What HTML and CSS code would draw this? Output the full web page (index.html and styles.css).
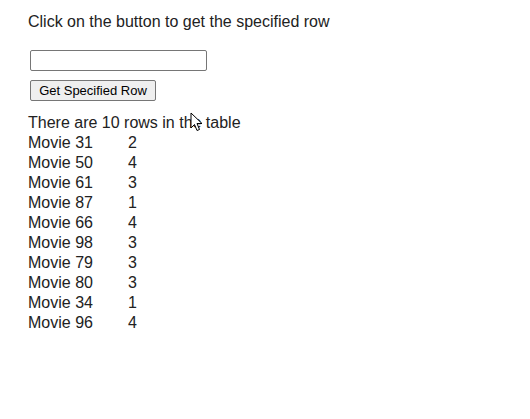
FILE: index.html
```html
<!DOCTYPE html>
<html>
<head>
<meta charset="utf-8">
<link rel="stylesheet" href="styles.css">
</head>
<body>
<div class="page">
  <p class="intro">Click on the button to get the specified row</p>
  <input class="field" type="text">
  <button class="btn">Get Specified Row</button>
  <p class="count">There are 10 rows in the table</p>
  <div class="rows">
    <span>Movie 31</span><span>2</span>
    <span>Movie 50</span><span>4</span>
    <span>Movie 61</span><span>3</span>
    <span>Movie 87</span><span>1</span>
    <span>Movie 66</span><span>4</span>
    <span>Movie 98</span><span>3</span>
    <span>Movie 79</span><span>3</span>
    <span>Movie 80</span><span>3</span>
    <span>Movie 34</span><span>1</span>
    <span>Movie 96</span><span>4</span>
  </div>
  <svg class="cursor" width="14" height="21" viewBox="0 0 14 21"><path d="M1 1 L1 16 L4.5 12.5 L7 18.5 L9.5 17.5 L7 11.5 L12 11.5 Z" fill="#fff" stroke="#000" stroke-width="1" stroke-linejoin="miter"/></svg>
</div>
</body>
</html>
```
FILE: styles.css
```css
html, body { margin: 0; padding: 0; background: #fff; }
.page {
  position: relative;
  padding: 12px 28px;
  font-family: "Liberation Sans", Arial, sans-serif;
  font-size: 16px;
  line-height: 20px;
  color: #222;
  display: flex;
  flex-direction: column;
  align-items: flex-start;
}
.intro { margin: 0 0 18px 0; }
.field {
  margin: 0 0 0 2px;
  width: 177px;
  height: 21px;
  box-sizing: border-box;
  border: 1px solid #767676;
  border-radius: 2px;
  padding: 1px 2px;
  font: 13px "Liberation Sans", Arial, sans-serif;
}
.btn {
  margin: 9px 0 0 2px;
  width: 126px;
  height: 21px;
  box-sizing: border-box;
  border: 1px solid #767676;
  border-radius: 2px;
  background: #efefef;
  color: #000;
  font: 13px "Liberation Sans", Arial, sans-serif;
  padding: 0 6px;
}
.count { margin: 12px 0 0 0; }
.rows {
  display: grid;
  grid-template-columns: 100px auto;
}
.cursor {
  position: absolute;
  left: 190px;
  top: 112px;
}
```
